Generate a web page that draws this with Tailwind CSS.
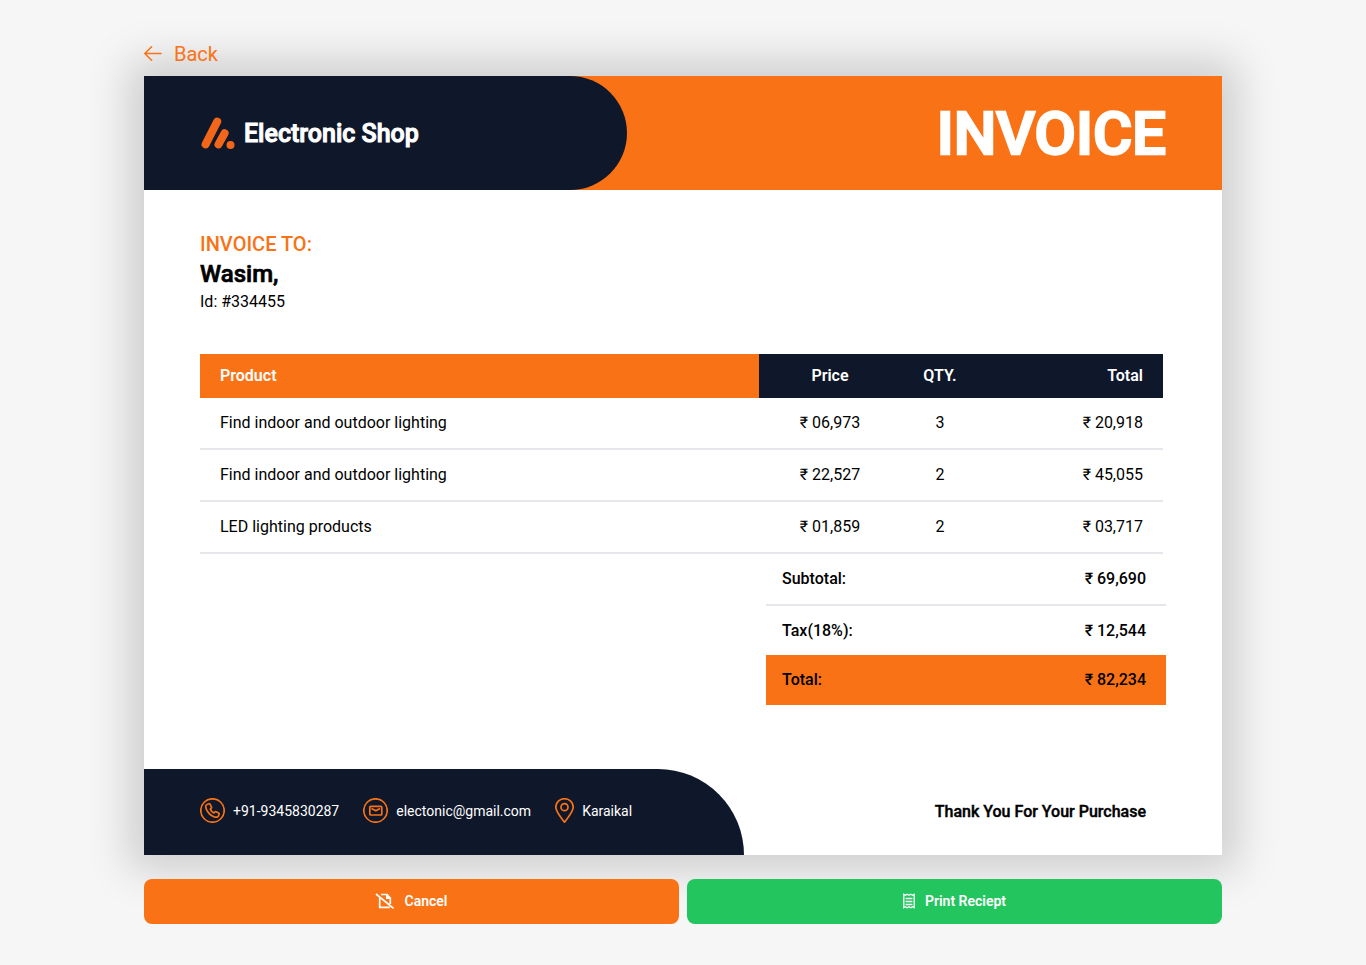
<!DOCTYPE html>
<html lang="en">
<head>
<meta charset="utf-8">
<title>Invoice</title>
<script src="https://cdn.jsdelivr.net/npm/@tailwindcss/browser@4"></script>
</head>
<body class="bg-[#f6f6f6] font-[Roboto,sans-serif] text-black font-normal h-[965px] overflow-hidden">
<div class="w-[1078px] mx-auto pt-8">
  <a class="flex items-center h-11 text-xl text-[#f97316]">
    <svg class="w-[18px] h-4 mr-3" viewBox="0 0 18 16" fill="none" stroke="currentColor" stroke-width="1.6" stroke-linecap="round" stroke-linejoin="round"><path d="M17 7.5H.8M7.6.8.8 7.5l6.8 6.7"/></svg>
    <span class="relative z-10">Back</span>
  </a>
  <main class="bg-white h-[779px] flex flex-col shadow-[0_0_40px_15px_rgba(0,0,0,0.17)]">
    <header class="bg-[#f97316] h-[114px] flex justify-between items-center pr-14 shrink-0">
      <div class="bg-[#0f172a] w-[483px] h-full rounded-r-full flex items-center pl-14">
        <svg class="w-9 h-9 mr-2" viewBox="0 0 36 36" fill="none" stroke="#f2661a" stroke-linecap="round" stroke-width="8"><path d="M5.6 29.4 17.2 6.6M18.5 29.4 24.6 18.300M30.500 29.900h.01"/></svg>
        <h1 class="text-[25px] leading-8 pt-0.5 font-medium text-white [-webkit-text-stroke:1px_white]">Electronic Shop</h1>
      </div>
      <h2 class="text-6xl pt-0.5 font-medium text-white [-webkit-text-stroke:2.5px_white]">INVOICE</h2>
    </header>
    <section class="px-14 pt-10 h-[164px] shrink-0">
      <p class="text-xl leading-7 font-medium text-[#f97316]">INVOICE TO:</p>
      <p class="text-2xl leading-8 font-medium [-webkit-text-stroke:0.7px_black]">Wasim,</p>
      <p class="text-base leading-6">Id: #334455</p>
    </section>
    <table class="ml-14 w-[963px] table-fixed text-base leading-6 border-separate border-spacing-0 [&_tbody_td]:border-b-2 [&_tbody_td]:border-gray-200 [&_td]:p-0">
      <colgroup><col class="w-[559px]"><col class="w-[142px]"><col class="w-[78px]"><col class="w-[184px]"></colgroup>
      <thead class="text-white"><tr class="h-11 bg-[#0f172a]">
        <th class="bg-[#f97316] text-left px-5 font-semibold">Product</th><th class="font-semibold">Price</th><th class="font-semibold">QTY.</th><th class="text-right pr-5 font-semibold">Total</th></tr></thead>
      <tbody>
        <tr class="h-[52px]"><td><span class="pl-5">Find indoor and outdoor lighting</span></td><td class="text-center">₹ 06,973</td><td class="text-center">3</td><td class="text-right"><span class="pr-5">₹ 20,918</span></td></tr>
        <tr class="h-[52px]"><td><span class="pl-5">Find indoor and outdoor lighting</span></td><td class="text-center">₹ 22,527</td><td class="text-center">2</td><td class="text-right"><span class="pr-5">₹ 45,055</span></td></tr>
        <tr class="h-[52px]"><td><span class="pl-5">LED lighting products</span></td><td class="text-center">₹ 01,859</td><td class="text-center">2</td><td class="text-right"><span class="pr-5">₹ 03,717</span></td></tr>
      </tbody>
    </table>
    <div class="w-[400px] ml-[622px] text-base leading-6 font-medium">
      <div class="h-[52px] border-b-2 border-gray-200 flex justify-between items-center pl-4 pr-5"><span>Subtotal:</span><span>₹ 69,690</span></div>
      <div class="h-[49px] flex justify-between items-center pl-4 pr-5"><span>Tax(18%):</span><span>₹ 12,544</span></div>
      <div class="h-[50px] bg-[#f97316] flex justify-between items-center pl-4 pr-5"><span>Total:</span><span>₹ 82,234</span></div>
    </div>
    <footer class="mt-auto h-[86px] flex justify-between items-center pr-[76px] shrink-0">
      <div class="bg-[#0f172a] w-[600px] h-full rounded-tr-[86px] pl-14 pb-[3px] flex items-center text-sm font-normal text-white">
        <svg class="w-[25px] h-[25px] mr-2" viewBox="0 0 25 25" fill="none" stroke="#f97316" stroke-width="1.7" stroke-linejoin="round"><circle cx="12.5" cy="12.5" r="11.7"/><path d="M9 5.800 7 6.500C5.400 7 5.500 9.200 6.400 11.300c1.600 3.500 4.200 6.100 7.500 7.400 1.900.7 3.700.8 4.400-.6l.8-1.900c.2-.5 0-.9-.4-1.100l-2.700-1.300c-.4-.2-.8-.1-1.100.2l-.9 1c-1.800-.8-3-2.100-3.700-3.900l1-.9c.3-.3.4-.7.2-1.100L10.200 6.300c-.2-.5-.7-.7-1.200-.5Z"/></svg>
        <span>+91-9345830287</span>
        <svg class="w-[25px] h-[25px] ml-6 mr-2" viewBox="0 0 25 25" fill="none" stroke="#f97316" stroke-width="1.7" stroke-linejoin="round"><circle cx="12.500" cy="12.500" r="11.700"/><rect x="6.800" y="8.300" width="12" height="8.700" rx="1"/><path d="m8.500 10.500 4.300 2.300 4.200-2.300"/></svg>
        <span>electonic@gmail.com</span>
        <svg class="w-[19px] h-[25px] ml-6 mr-2" viewBox="0 0 19 25" fill="none" stroke="#f97316" stroke-width="1.700" stroke-linejoin="round"><path d="M9.500 24.200C7 20.700.8 14.200.8 9.100a8.700 8.400 0 0 1 17.400 0c0 5.100-6.200 11.600-8.700 15.100Z"/><circle cx="9.500" cy="9.200" r="3.500"/></svg>
        <span>Karaikal</span>
      </div>
      <p class="text-base font-medium [-webkit-text-stroke:0.4px_black]">Thank You For Your Purchase</p>
    </footer>
  </main>
  <div class="mt-6 grid grid-cols-2 gap-2 text-sm font-semibold text-white relative">
    <button class="h-[45px] pb-px pr-px rounded-lg bg-[#f97316] flex items-center justify-center gap-2.5">
      <svg class="w-5 h-4" viewBox="0 0 20 16" fill="none" stroke="currentColor" stroke-width="1.700"><path d="M1 1 18.500 15.300M4.700 5v9.300h10M6 1.500h6l3.300 3.500v6"/><path d="M11 1.500V6h4.500V5L12 1.500Z" fill="currentColor" stroke="none"/></svg>
      <span>Cancel</span></button>
    <button class="h-[45px] pb-px rounded-lg bg-[#22c55e] flex items-center justify-center gap-2.5">
      <svg class="w-3 h-4" viewBox="0 0 12 16" fill="none" stroke="currentColor" stroke-width="1.300"><path d="M.8 1.300 2.500 2.300 4.200 1.300 6 2.300 7.800 1.300 9.500 2.300 11.200 1.300v13.400L9.500 13.700 7.800 14.700 6 13.700 4.200 14.700 2.500 13.700.8 14.700ZM2.600 5.500h6.800M2.600 8.500h6.800M2.600 11.500h6.800"/></svg>
      <span>Print Reciept</span></button>
  </div>
</div>
</body>
</html>
